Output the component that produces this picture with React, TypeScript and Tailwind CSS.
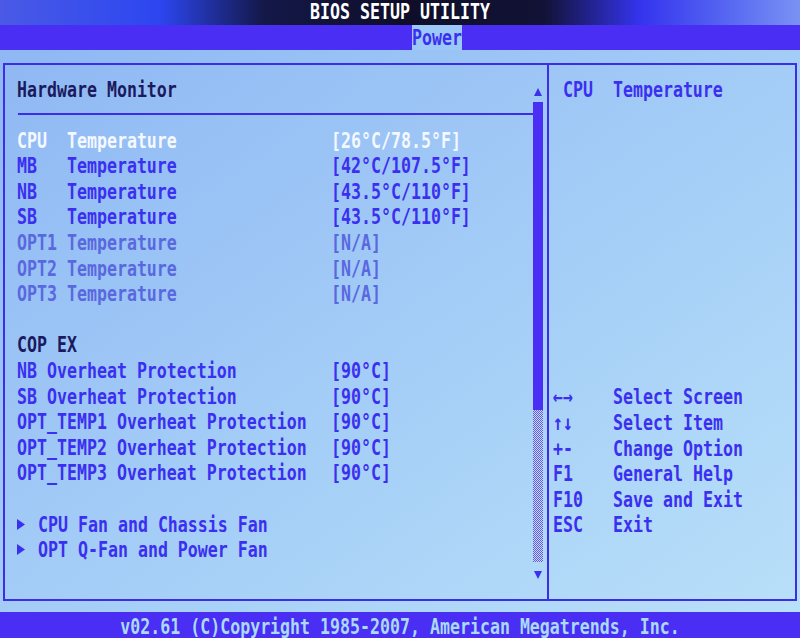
import React from 'react';

type Tone = 'head' | 'sel' | 'on' | 'off' | 'gap';

const toneClass: Record<Tone, string> = {
  head: 'text-[#1b1a5e]',
  sel: 'text-[#f4f8ff]',
  on: 'text-[#3b2ff0]',
  off: 'text-[#5a68e0]',
  gap: '',
};

const items: { label: string; value?: string; tone: Tone; sub?: boolean }[] = [
  { label: 'CPU  Temperature', value: '[26°C/78.5°F]', tone: 'sel' },
  { label: 'MB   Temperature', value: '[42°C/107.5°F]', tone: 'on' },
  { label: 'NB   Temperature', value: '[43.5°C/110°F]', tone: 'on' },
  { label: 'SB   Temperature', value: '[43.5°C/110°F]', tone: 'on' },
  { label: 'OPT1 Temperature', value: '[N/A]', tone: 'off' },
  { label: 'OPT2 Temperature', value: '[N/A]', tone: 'off' },
  { label: 'OPT3 Temperature', value: '[N/A]', tone: 'off' },
  { label: '', tone: 'gap' },
  { label: 'COP EX', tone: 'head' },
  { label: 'NB Overheat Protection', value: '[90°C]', tone: 'on' },
  { label: 'SB Overheat Protection', value: '[90°C]', tone: 'on' },
  { label: 'OPT_TEMP1 Overheat Protection', value: '[90°C]', tone: 'on' },
  { label: 'OPT_TEMP2 Overheat Protection', value: '[90°C]', tone: 'on' },
  { label: 'OPT_TEMP3 Overheat Protection', value: '[90°C]', tone: 'on' },
  { label: '', tone: 'gap' },
  { label: 'CPU Fan and Chassis Fan', tone: 'on', sub: true },
  { label: 'OPT Q-Fan and Power Fan', tone: 'on', sub: true },
];

const keys = [
  ['←→', 'Select Screen'],
  ['↑↓', 'Select Item'],
  ['+-', 'Change Option'],
  ['F1', 'General Help'],
  ['F10', 'Save and Exit'],
  ['ESC', 'Exit'],
];

function Arrow({ down }: { down?: boolean }) {
  return (
    <svg width="10" height="10" viewBox="0 0 10 10" className="block">
      <polygon points={down ? '1,1 9,1 5,9' : '5,1 9,9 1,9'} fill="#3b2ff0" />
    </svg>
  );
}

export default function App() {
  return (
    <div className="w-[800px] h-[638px] flex flex-col overflow-hidden font-['DejaVu_Sans_Mono','Liberation_Mono',monospace] font-bold text-[16.6px] leading-[25.6px] whitespace-pre">
      {/* Title bar */}
      <div className="h-[25px] flex items-center justify-center bg-[linear-gradient(90deg,#4a5ae6_0%,#2c46f0_20%,#141848_33%,#0e0e2a_50%,#121236_68%,#3434ee_80%,#5a6cf2_92%,#7a92f4_100%)]">
        <div className="text-white scale-y-[1.25]">BIOS SETUP UTILITY</div>
      </div>

      {/* Tab row */}
      <div className="h-[25px] flex bg-[#4b2ef3] pl-[412px]">
        <div className="bg-[#9cc8f8] text-[#3b2ff0] h-full flex items-center pt-[1px]">
          <div className="scale-y-[1.3]">Power</div>
        </div>
      </div>

      {/* Main */}
      <div className="flex-1 bg-linear-to-br from-[#8fb8f4] to-[#b8e0f9] px-[3px] pt-[13px] pb-[11px]">
        <div className="h-full flex border-2 border-[#3b2ee6]">
          {/* Left panel */}
          <div className="w-[544px] flex border-r-2 border-[#3b2ee6]">
            <div className="flex-1 pl-[12px] pt-[12px]">
              <div className={`scale-y-[1.3] ${toneClass.head}`}>Hardware Monitor</div>
              <div className="mt-[10px] ml-[1px] h-[2px] bg-[#3b2ee6]" />
              <div className="mt-[13px]">
                {items.map((it, i) =>
                  it.tone === 'gap' ? (
                    <div key={i} className="h-[25.6px]" />
                  ) : (
                    <div key={i} className={`grid grid-cols-[315px_1fr] ${toneClass[it.tone]}`}>
                      <div className="flex items-center">
                        {it.sub && (
                          <span className="w-[21px] flex">
                            <svg width="8" height="11" viewBox="0 0 8 11">
                              <polygon points="0,0 8,5.5 0,11" fill="#3b2ff0" />
                            </svg>
                          </span>
                        )}
                        <span className="inline-block scale-y-[1.3]">{it.label}</span>
                      </div>
                      <div className="scale-y-[1.3] -ml-[1px]">{it.value}</div>
                    </div>
                  )
                )}
              </div>
            </div>

            {/* Scroll bar */}
            <div className="w-[10px] mr-[4px] pt-[22px] flex flex-col items-center">
              <Arrow />
              <div className="mt-[5px] w-[10px] h-[308px] bg-[#4b2ef3]" />
              <div className="w-[10px] h-[152px] bg-[repeating-conic-gradient(#6458e6_0%_25%,#c4dcf8_0%_50%)] bg-size-[2px_2px]" />
              <div className="mt-[8px]">
                <Arrow down />
              </div>
            </div>
          </div>

          {/* Right panel */}
          <div className="flex-1 flex flex-col pl-[4px] pt-[12px] pb-[61px] text-[#3b2ff0]">
            <div className="ml-[10px] scale-y-[1.3]">CPU  Temperature</div>
            <div className="mt-auto">
              {keys.map(([k, d]) => (
                <div key={k} className="flex scale-y-[1.3]">
                  <span className="w-[60px]">{k}</span>
                  <span>{d}</span>
                </div>
              ))}
            </div>
          </div>
        </div>
      </div>

      {/* Footer */}
      <div className="h-[26px] bg-[#4b2ef3] flex items-center justify-center pt-[3px] text-[#a9daf8]">
        <div className="scale-y-[1.3]">v02.61 (C)Copyright 1985-2007, American Megatrends, Inc.</div>
      </div>
    </div>
  );
}
